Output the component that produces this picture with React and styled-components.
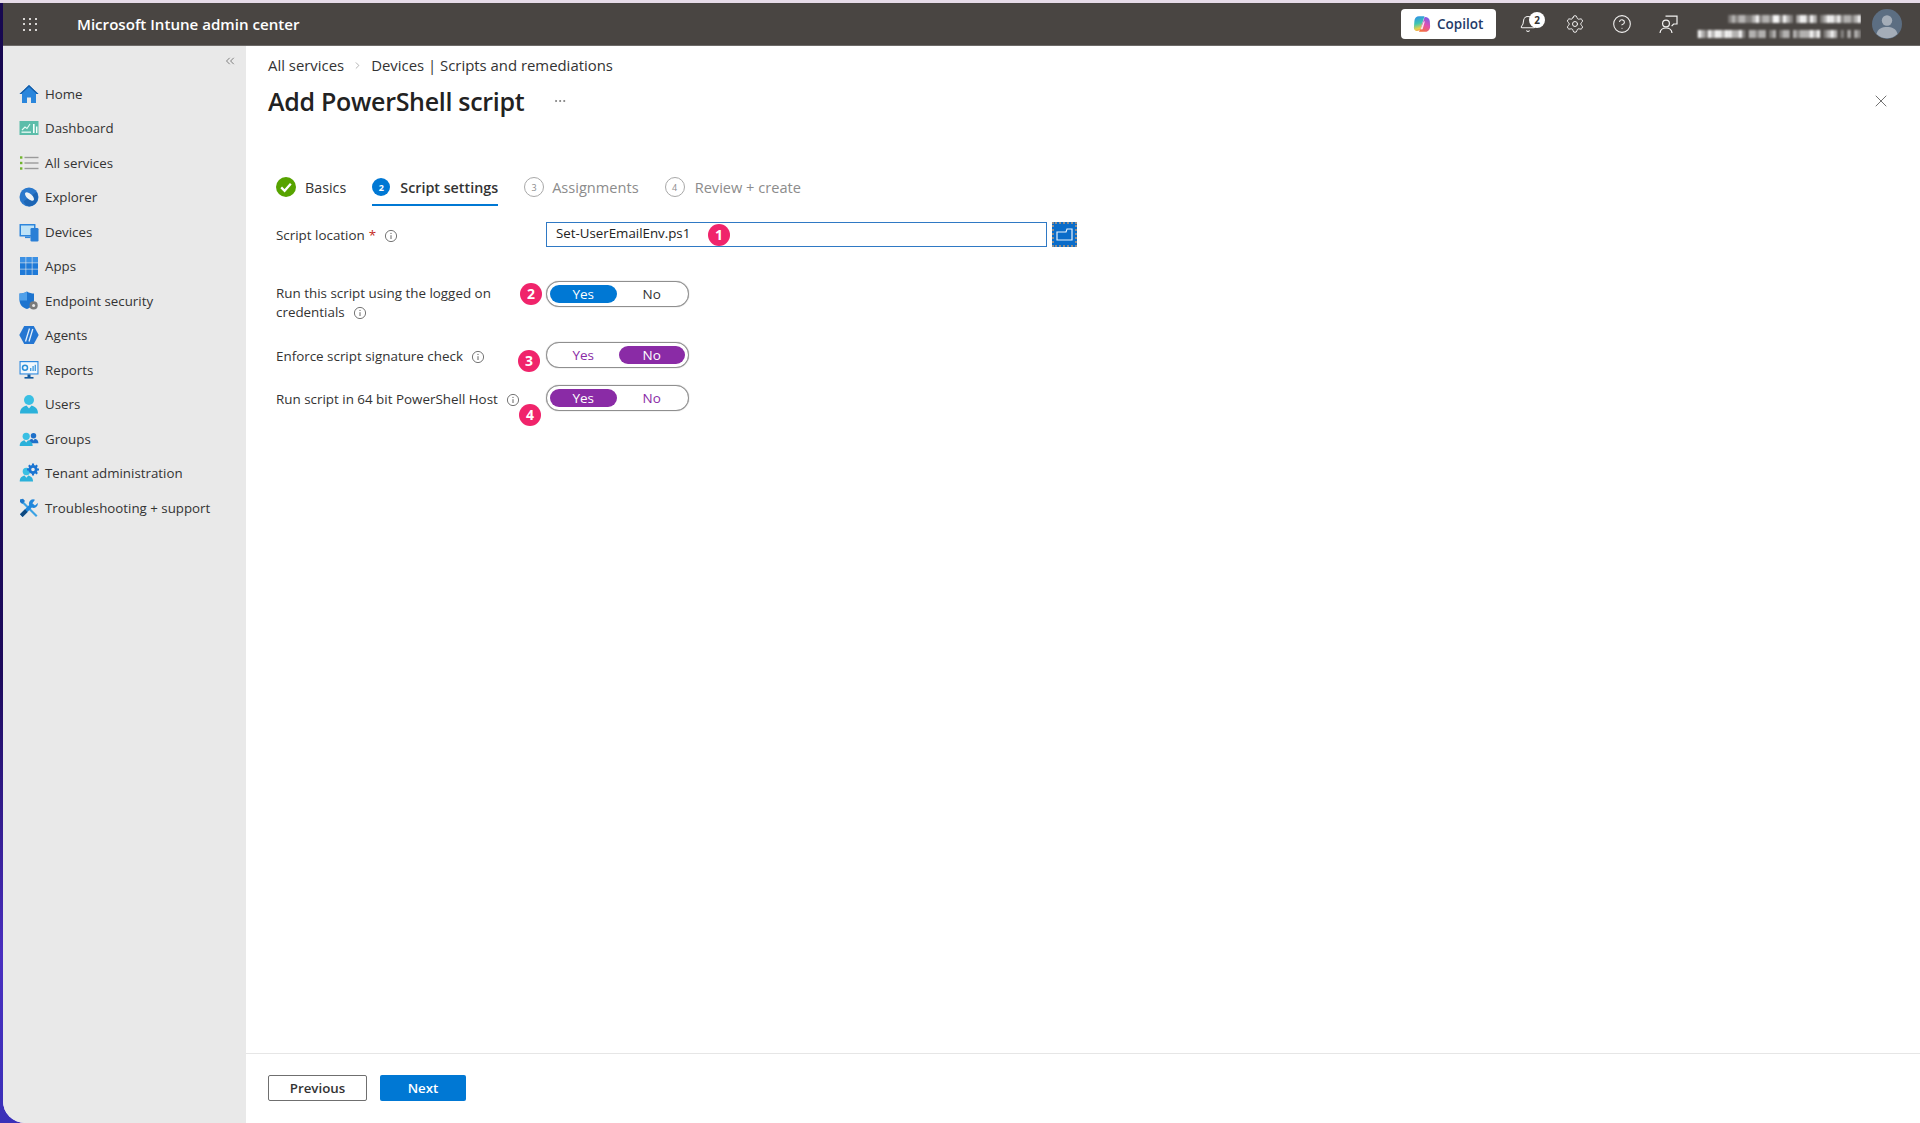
import React from 'react';
import styled, { createGlobalStyle } from 'styled-components';
import { X, ChevronRight, ChevronsLeft, Settings, CircleHelp, Bell, Ellipsis } from 'lucide-react';

const FONT = `"Open Sans", "Noto Sans", "Liberation Sans", sans-serif`;

const Global = createGlobalStyle`
  html, body { margin: 0; padding: 0; }
  body { font-family: ${FONT}; color: #2b2b2b; }
  * { box-sizing: border-box; }
`;

const Wallpaper = styled.div`
  height: 1123px;
  overflow: hidden;
  padding: 3px 0 0 3px;
  background: linear-gradient(180deg, #e6dbe8 0, #e6dbe8 3px, #170850 3px, #1d0a5c 60%, #4a2fc0 85%, #3a30b8 100%);
`;
const Frame = styled.div`
  height: 1120px;
  display: flex;
  flex-direction: column;
  background: #fff;
  border-bottom-left-radius: 22px;
  overflow: hidden;
`;
const TopBar = styled.header`
  height: 43px;
  flex: none;
  display: flex;
  align-items: center;
  background: #494542;
  color: #fff;
  border-bottom: 1px solid #6d6a68;
`;
const Waffle = styled.div`
  width: 14px;
  margin-left: 20px;
  display: grid;
  grid-template-columns: repeat(3, 2px);
  justify-content: space-between;
  row-gap: 3.5px;
  span { width: 2px; height: 2px; background: #d8d6d4; }
`;
const Brand = styled.div`
  margin-left: 40px;
  font-size: 15.1px;
  font-weight: 600;
`;
const TopRight = styled.div`
  margin-left: auto;
  display: flex;
  align-items: center;
`;
const CopilotButton = styled.div`
  width: 95px;
  height: 30px;
  display: flex;
  align-items: center;
  gap: 6px;
  padding-left: 12px;
  background: #fff;
  border-radius: 4px;
  color: #243a68;
  font-size: 13.5px;
  font-weight: 600;
`;
const HeaderIcon = styled.div`
  position: relative;
  width: 47px;
  display: flex;
  justify-content: center;
  color: #f2f1f0;
`;
const BellSlot = styled(HeaderIcon)`
  margin-left: 8px;
`;
const Badge = styled.span`
  position: absolute;
  top: -3px;
  left: 25px;
  width: 16px;
  height: 16px;
  border-radius: 50%;
  background: #fff;
  color: #333;
  font-size: 10px;
  font-weight: 700;
  line-height: 16px;
  text-align: center;
`;
const Avatar = styled.svg`
  width: 30px;
  height: 30px;
  margin: 0 18px 0 11px;
  flex: none;
`;
const Body = styled.div`
  flex: 1;
  min-height: 0;
  display: flex;
`;
const Sidebar = styled.nav`
  width: 243px;
  flex: none;
  background: #e9e9e9;
`;
const CollapseRow = styled.div`
  height: 30.5px;
  display: flex;
  justify-content: flex-end;
  align-items: center;
  padding-right: 9px;
  color: #5c5c5c;
`;
const NavItem = styled.div`
  height: 34.5px;
  display: flex;
  align-items: center;
  gap: 6px;
  padding-left: 16px;
  font-size: 13.3px;
  color: #333;
  svg { width: 20px; height: 20px; flex: none; }
`;
const Main = styled.main`
  flex: 1;
  min-width: 0;
  display: flex;
  flex-direction: column;
`;
const Content = styled.div`
  flex: 1;
  padding: 9px 29px 0 22px;
`;
const Breadcrumb = styled.div`
  height: 20px;
  display: flex;
  align-items: center;
  font-size: 14.9px;
  color: #333;
  gap: 8px;
  svg { color: #777; }
`;
const TitleRow = styled.div`
  height: 36px;
  margin-top: 8px;
  display: flex;
  align-items: center;
`;
const Title = styled.h1`
  margin: 0;
  font-size: 25px;
  font-weight: 600;
  letter-spacing: -0.3px;
  color: #222;
`;
const More = styled.span`
  margin-left: 29px;
  display: flex;
  color: #666;
`;
const Close = styled.span`
  margin-left: auto;
  display: flex;
  color: #555;
`;
const Tabs = styled.div`
  margin: 51px 0 0 8px;
  display: flex;
  gap: 26px;
`;
const Tab = styled.div`
  height: 36px;
  display: flex;
  align-items: center;
  gap: ${p => p.$gap}px;
  font-size: ${p => (p.$muted ? 14.6 : 14.3)}px;
  font-weight: ${p => (p.$active ? 600 : 400)};
  color: ${p => (p.$muted ? '#8c8c8c' : '#333')};
  border-bottom: 2px solid ${p => (p.$active ? '#0078d4' : 'transparent')};
`;
const StepDot = styled.span`
  width: ${p => (p.$active ? 18 : 20)}px;
  height: ${p => (p.$active ? 18 : 20)}px;
  border-radius: 50%;
  display: flex;
  align-items: center;
  justify-content: center;
  font-size: 9px;
  font-weight: ${p => (p.$active ? 700 : 400)};
  color: ${p => (p.$active ? '#fff' : '#8c8c8c')};
  background: ${p => (p.$active ? '#0078d4' : '#fff')};
  border: ${p => (p.$active ? 'none' : '1px solid #a8a8a8')};
`;
const Form = styled.div`
  margin: 16px 0 0 8px;
`;
const FieldRow = styled.div`
  display: grid;
  grid-template-columns: 270px 1fr;
  margin-top: ${p => p.$top || 0}px;
`;
const Label = styled.div`
  width: ${p => p.$w || 230}px;
  padding-top: ${p => p.$pad || 4}px;
  font-size: 13.4px;
  line-height: 19px;
  color: #333;
`;
const Star = styled.span`
  color: #c42b1c;
  margin-left: 4px;
`;
const Info = styled.svg`
  width: 14px;
  height: 14px;
  margin-left: ${p => p.$left || 8}px;
  vertical-align: -2.5px;
`;
const Field = styled.div`
  position: relative;
  display: flex;
  gap: 5px;
`;
const Input = styled.div`
  width: 501px;
  height: 25px;
  padding-left: 9px;
  border: 1.5px solid #2f79c4;
  font-size: 13.3px;
  line-height: 20px;
  color: #222;
`;
const FolderButton = styled.div`
  width: 25px;
  height: 25px;
  display: flex;
  align-items: center;
  justify-content: center;
  background: #0a6cc9;
  border: 2px dotted #8e8e8e;
`;
const Toggle = styled.div`
  width: 143px;
  height: 26px;
  padding: 3px;
  display: grid;
  grid-template-columns: 1fr 1fr;
  gap: 2px;
  background: #fff;
  border: 1.5px solid #8f8f8f;
  border-radius: 13px;
  box-shadow: 0 0 1px #888;
`;
const ToggleOption = styled.div`
  border-radius: 10px;
  display: flex;
  align-items: center;
  justify-content: center;
  font-size: 13.5px;
  color: ${p => (p.$on ? '#fff' : p.$tint)};
  background: ${p => (p.$on ? p.$tint : 'transparent')};
`;
const Marker = styled.span`
  position: absolute;
  left: ${p => p.$x}px;
  top: ${p => p.$y}px;
  width: 22px;
  height: 22px;
  margin: -11px 0 0 -11px;
  border-radius: 50%;
  background: #f0246b;
  color: #fff;
  font-size: 14px;
  font-weight: 700;
  line-height: 22px;
  text-align: center;
`;
const Footer = styled.footer`
  height: 70px;
  flex: none;
  display: flex;
  gap: 13px;
  padding: 21px 0 0 22px;
  border-top: 1px solid #e6e6e6;
`;
const Button = styled.div`
  width: ${p => p.$w}px;
  height: 26px;
  display: flex;
  align-items: center;
  justify-content: center;
  border-radius: 2px;
  font-size: 13.3px;
  font-weight: 600;
  color: ${p => (p.$primary ? '#fff' : '#333')};
  background: ${p => (p.$primary ? '#0078d4' : '#fff')};
  border: ${p => (p.$primary ? 'none' : '1.5px solid #6f6f6f')};
`;

const HomeIcon = () => (
  <svg viewBox="0 0 20 20">
    <path d="M10 1 L0.5 10 L3 10 L3 19 L8 19 L8 13.5 L12 13.5 L12 19 L17 19 L17 10 L19.5 10 Z" fill="#2a86dc" />
    <path d="M10 1 L0.5 10 L2.2 10 L10 3 L17.8 10 L19.5 10 Z" fill="#155ea8" />
  </svg>
);
const DashboardIcon = () => (
  <svg viewBox="0 0 20 20">
    <rect x="0.5" y="3" width="19" height="14" fill="#5cbdaa" />
    <path d="M3 12 L6 9 L8 10.5 L11 6" stroke="#e9fbf6" strokeWidth="1.1" fill="none" />
    <rect x="14" y="6" width="1.6" height="9" fill="#f4fffb" />
    <rect x="17" y="8.5" width="1.4" height="6.5" fill="#f4fffb" />
    <rect x="2.5" y="13.5" width="9.5" height="1.4" fill="#dff6f0" />
  </svg>
);
const ServicesIcon = () => (
  <svg viewBox="0 0 20 20">
    {[4.5, 10, 15.5].map(y => (
      <g key={y}>
        <rect x="1" y={y - 1.2} width="2.4" height="2.4" fill="#70b42c" />
        <rect x="5.5" y={y - 0.7} width="14" height="1.4" fill="#9a9a9a" />
      </g>
    ))}
  </svg>
);
const ExplorerIcon = () => (
  <svg viewBox="0 0 20 20">
    <circle cx="10" cy="10" r="9.5" fill="#2a78cc" />
    <path d="M4.5 14.5 L17.5 5 A9.5 9.5 0 0 1 10 19.5 A9.5 9.5 0 0 1 4.5 14.5Z" fill="#1d65b4" />
    <ellipse cx="10.5" cy="9.5" rx="5.6" ry="2.6" transform="rotate(42 10.5 9.5)" fill="#eef3f6" />
  </svg>
);
const DevicesIcon = () => (
  <svg viewBox="0 0 20 20">
    <rect x="0.5" y="2" width="16" height="12.5" rx="0.6" fill="#2e86dc" />
    <rect x="2" y="3.5" width="13" height="9.5" fill="#bfe3f7" />
    <rect x="11.5" y="6" width="8" height="13.5" rx="1.2" fill="#2a7fd6" />
    <rect x="6" y="14.5" width="5.5" height="1.6" fill="#2e86dc" />
  </svg>
);
const AppsIcon = () => (
  <svg viewBox="0 0 20 20">
    {[1, 7.2, 13.4].map(y =>
      [1, 7.2, 13.4].map(x => <rect key={`${x}-${y}`} x={x} y={y} width="5.6" height="5.6" fill={y < 5 ? '#3b90e4' : '#1f7ad8'} />)
    )}
  </svg>
);
const ShieldIcon = () => (
  <svg viewBox="0 0 20 20">
    <path d="M8 0.5 C10 2 13 2.6 15 2.6 L15 9 C15 14 11.5 16.8 8 18 C4 16.8 0.5 14 0.5 9 L0.5 2.6 C3 2.6 6 2 8 0.5Z" fill="#1d74cf" />
    <path d="M8 0.5 L8 9.5 L0.5 9.5 L0.5 2.6 C3 2.6 6 2 8 0.5Z" fill="#4fa0ea" />
    <circle cx="14.6" cy="14.4" r="4.1" fill="#7a7a7a" />
    <circle cx="14.6" cy="14.4" r="1.5" fill="#e9e9e9" />
  </svg>
);
const AgentsIcon = () => (
  <svg viewBox="0 0 20 20">
    <path d="M5.2 1 H14.8 L19.7 10 L14.8 19 H5.2 L0.3 10Z" fill="#2476d2" />
    <path d="M6.5 16.5 L10.5 3.5 M10 16.5 L13.8 4" stroke="#dfeefb" strokeWidth="1.3" />
  </svg>
);
const ReportsIcon = () => (
  <svg viewBox="0 0 20 20">
    <rect x="0.5" y="1" width="19" height="13.5" fill="#2f8adf" />
    <rect x="1.6" y="2.2" width="16.8" height="11.2" fill="#f1f8fd" />
    <circle cx="6" cy="7.8" r="2.5" fill="none" stroke="#2a8fd8" strokeWidth="1.5" />
    <rect x="11" y="8" width="1.4" height="3" fill="#4aa0e0" />
    <rect x="13.4" y="6" width="1.4" height="5" fill="#4aa0e0" />
    <rect x="15.6" y="4.8" width="1.4" height="6.2" fill="#4aa0e0" />
    <rect x="8.5" y="14.5" width="3" height="2.5" fill="#135a9e" />
    <rect x="5.5" y="17" width="9" height="1.6" fill="#135a9e" />
  </svg>
);
const Person = ({ head = '#39bfe3', body = '#2bb1da' }) => (
  <g>
    <circle cx="10" cy="6" r="5" fill={head} />
    <path d="M1 19.5 C1 14.5 4 12.5 7.5 11.5 L10 14.5 L12.5 11.5 C16 12.5 19 14.5 19 19.5Z" fill={body} />
  </g>
);
const UsersIcon = () => (
  <svg viewBox="0 0 20 20"><Person /></svg>
);
const GroupsIcon = () => (
  <svg viewBox="0 0 20 20">
    <g transform="translate(9 3.5) scale(0.55)"><Person head="#1f70c9" body="#1f70c9" /></g>
    <g transform="translate(0 3) scale(0.72)"><Person /></g>
  </svg>
);
const TenantIcon = () => (
  <svg viewBox="0 0 20 20">
    <g transform="translate(0 4) scale(0.74)"><Person /></g>
    <circle cx="14" cy="6.5" r="3.2" fill="none" stroke="#1a74d2" strokeWidth="2.8" />
    <path d="M14 .6 V2.5 M14 10.5 V12.4 M8 6.5 H10 M18 6.5 H20 M9.8 2.3 L11.2 3.7 M16.8 9.3 L18.2 10.7 M18.2 2.3 L16.8 3.7" stroke="#1a74d2" strokeWidth="2.1" />
  </svg>
);
const ToolsIcon = () => (
  <svg viewBox="0 0 20 20">
    <path d="M2 1 L18.5 17.5 L17 19 L3 5 L1 3Z" fill="#3aa2e4" />
    <path d="M1 1.5 L4 0.8 L6 3 L3.2 6 L1 4Z" fill="#1e78cc" />
    <path d="M14 1.2 A4.3 4.3 0 0 0 10.2 7 L1 16.2 L3.6 19 L12.8 9.6 A4.3 4.3 0 0 0 18.8 5 L16 7.4 L13.4 5.2 L16 1.8 A4 4 0 0 0 14 1.2Z" fill="#2087dc" />
    <path d="M1 16.2 L6 11.2 L8.6 14 L3.6 19Z" fill="#10497f" />
  </svg>
);
const CopilotLogo = () => (
  <svg width="18" height="18" viewBox="0 0 18 18">
    <defs>
      <linearGradient id="cpA" x1="0.2" y1="0" x2="0.4" y2="1">
        <stop offset="0" stopColor="#2f8fe8" />
        <stop offset="0.5" stopColor="#3fc6b0" />
        <stop offset="0.85" stopColor="#e8d24a" />
        <stop offset="1" stopColor="#f0a03c" />
      </linearGradient>
      <linearGradient id="cpB" x1="0.7" y1="0" x2="0.3" y2="1">
        <stop offset="0" stopColor="#7a5ce8" />
        <stop offset="0.5" stopColor="#e24fb0" />
        <stop offset="1" stopColor="#f5703c" />
      </linearGradient>
    </defs>
    <path d="M12 2 C14.4 2 16.4 3.6 16.8 6 L17.1 11 C17.2 14 15.5 16.8 12.5 16.8 H6 L9 9 L11 4 C11.2 2.8 11.4 2 12 2Z" fill="url(#cpB)" />
    <path d="M6 1.2 H11.5 L7.6 13.6 C7 15.8 5.4 16 4 16 C2 16 0.8 14.6 0.9 12.5 L1.4 6 C1.6 3 3.4 1.2 6 1.2Z" fill="url(#cpA)" />
    <path d="M7.4 14.4 L10.8 6.2 L11.8 6.4 L9.6 14.2Z" fill="#fff" opacity="0.85" />
  </svg>
);
const FeedbackIcon = () => (
  <svg width="19" height="19" viewBox="0 0 19 19" fill="none" stroke="#f2f1f0" strokeWidth="1.2">
    <circle cx="7" cy="8.5" r="3.4" />
    <path d="M1 18 C1.4 14.6 4 13 7 13 C10 13 12.6 14.6 13 18" />
    <path d="M6.5 1.2 H18 V9 H14.6 L12.6 11.2" />
  </svg>
);
const FolderIcon = () => (
  <svg width="17" height="15" viewBox="0 0 17 15" fill="none" stroke="#e6f1fb" strokeWidth="1.2">
    <path d="M1 5 H10 L11 2 H16 V13 H1Z" />
  </svg>
);
const InfoIcon = ({ left }) => (
  <Info $left={left} viewBox="0 0 14 14" fill="none">
    <circle cx="7" cy="7" r="5.6" stroke="#666" strokeWidth="0.9" />
    <path d="M7 6.2 V10" stroke="#666" strokeWidth="1" />
    <circle cx="7" cy="4.4" r="0.6" fill="#666" />
  </Info>
);
const BasicsCheck = () => (
  <svg width="20" height="20" viewBox="0 0 20 20">
    <circle cx="10" cy="10" r="10" fill="#57a300" />
    <path d="M5.2 10.4 L8.6 13.8 L14.8 6.8" fill="none" stroke="#fff" strokeWidth="2.3" />
  </svg>
);

const mosaicRows = [
  { y: 14, h: 8, cells: '.:.::..:#.::.##.#:. :##.#: .:##:#.::.:#' },
  { y: 29, h: 8, cells: '#:.#:##:##::#. ::.:: .: .:: :.:::#:# .:#: . : :.' },
];
const shade = { '#': 0.95, ':': 0.6, '.': 0.32 };
const RedactedAccount = () => (
  <svg width="169" height="46" viewBox="0 0 169 46">
    <defs>
      <filter id="mosaicBlur"><feGaussianBlur stdDeviation="1" /></filter>
    </defs>
    <g filter="url(#mosaicBlur)" fill="#fff">
      {mosaicRows.map(r =>
        [...r.cells].map((c, i) =>
          shade[c] ? (
            <rect key={`${r.y}-${i}`} x={169 - (r.cells.length - i) * 3.4} y={r.y} width="3.4" height={r.h} opacity={shade[c]} />
          ) : null
        )
      )}
    </g>
  </svg>
);

const nav = [
  ['Home', HomeIcon],
  ['Dashboard', DashboardIcon],
  ['All services', ServicesIcon],
  ['Explorer', ExplorerIcon],
  ['Devices', DevicesIcon],
  ['Apps', AppsIcon],
  ['Endpoint security', ShieldIcon],
  ['Agents', AgentsIcon],
  ['Reports', ReportsIcon],
  ['Users', UsersIcon],
  ['Groups', GroupsIcon],
  ['Tenant administration', TenantIcon],
  ['Troubleshooting + support', ToolsIcon],
];

const BLUE = '#0078d4';
const PURPLE = '#8a2ba6';

const YesNo = ({ value, tint }) => (
  <Toggle>
    <ToggleOption $on={value === 'Yes'} $tint={value === 'Yes' ? tint : tint === BLUE ? '#333' : tint}>Yes</ToggleOption>
    <ToggleOption $on={value === 'No'} $tint={value === 'No' ? tint : tint === BLUE ? '#333' : tint}>No</ToggleOption>
  </Toggle>
);

export default function App() {
  return (
    <>
      <Global />
      <Wallpaper>
        <Frame>
          <TopBar>
            <Waffle>{Array.from({ length: 9 }, (_, i) => <span key={i} />)}</Waffle>
            <Brand>Microsoft Intune admin center</Brand>
            <TopRight>
              <CopilotButton><CopilotLogo />Copilot</CopilotButton>
              <BellSlot>
                <Bell size={18} strokeWidth={1.4} />
                <Badge>2</Badge>
              </BellSlot>
              <HeaderIcon><Settings size={20} strokeWidth={1.2} /></HeaderIcon>
              <HeaderIcon><CircleHelp size={20} strokeWidth={1.3} /></HeaderIcon>
              <HeaderIcon><FeedbackIcon /></HeaderIcon>
              <RedactedAccount />
              <Avatar viewBox="0 0 30 30">
                <circle cx="15" cy="15" r="15" fill="#5c6e82" />
                <circle cx="15" cy="11.5" r="5.2" fill="#a4adb8" />
                <path d="M4.5 25 C6 19.5 10 18 15 18 C20 18 24 19.5 25.5 25 A15 15 0 0 1 4.5 25Z" fill="#a4adb8" />
              </Avatar>
            </TopRight>
          </TopBar>
          <Body>
            <Sidebar>
              <CollapseRow><ChevronsLeft size={14} strokeWidth={1.3} /></CollapseRow>
              {nav.map(([label, Icon]) => (
                <NavItem key={label}><Icon />{label}</NavItem>
              ))}
            </Sidebar>
            <Main>
              <Content>
                <Breadcrumb>
                  <span>All services</span>
                  <ChevronRight size={11} strokeWidth={1.2} />
                  <span>Devices | Scripts and remediations</span>
                </Breadcrumb>
                <TitleRow>
                  <Title>Add PowerShell script</Title>
                  <More><Ellipsis size={14} strokeWidth={1.3} /></More>
                  <Close><X size={20} strokeWidth={1} /></Close>
                </TitleRow>
                <Tabs>
                  <Tab $gap={9}><BasicsCheck />Basics</Tab>
                  <Tab $gap={10} $active><StepDot $active>2</StepDot>Script settings</Tab>
                  <Tab $gap={8} $muted><StepDot>3</StepDot>Assignments</Tab>
                  <Tab $gap={10} $muted><StepDot>4</StepDot>Review + create</Tab>
                </Tabs>
                <Form>
                  <FieldRow>
                    <Label>Script location<Star>*</Star><InfoIcon /></Label>
                    <Field>
                      <Input>Set-UserEmailEnv.ps1</Input>
                      <FolderButton><FolderIcon /></FolderButton>
                      <Marker $x={173} $y={13}>1</Marker>
                    </Field>
                  </FieldRow>
                  <FieldRow $top={34}>
                    <Label $pad={3}>Run this script using the logged on credentials<InfoIcon /></Label>
                    <Field>
                      <YesNo value="Yes" tint={BLUE} />
                      <Marker $x={-15} $y={13}>2</Marker>
                    </Field>
                  </FieldRow>
                  <FieldRow $top={20}>
                    <Label $pad={5}>Enforce script signature check<InfoIcon /></Label>
                    <Field>
                      <YesNo value="No" tint={PURPLE} />
                      <Marker $x={-17} $y={19}>3</Marker>
                    </Field>
                  </FieldRow>
                  <FieldRow $top={17}>
                    <Label $pad={5} $w={262}>Run script in 64 bit PowerShell Host<InfoIcon /></Label>
                    <Field>
                      <YesNo value="Yes" tint={PURPLE} />
                      <Marker $x={-16} $y={30}>4</Marker>
                    </Field>
                  </FieldRow>
                </Form>
              </Content>
              <Footer>
                <Button $w={99}>Previous</Button>
                <Button $w={86} $primary>Next</Button>
              </Footer>
            </Main>
          </Body>
        </Frame>
      </Wallpaper>
    </>
  );
}
